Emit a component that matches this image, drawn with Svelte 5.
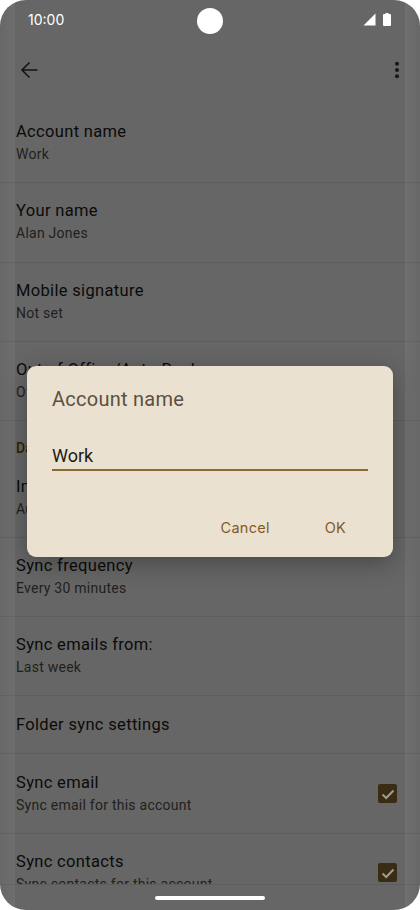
<script lang="ts">
  const groups = [
    [
      { title: "Account name", sub: "Work" },
      { title: "Your name", sub: "Alan Jones" },
      { title: "Mobile signature", sub: "Not set" },
      { title: "Out of Office/Auto-Reply", sub: "Off" }
    ],
    [
      { title: "Inbox check frequency", sub: "Automatic (Push)" },
      { title: "Sync frequency", sub: "Every 30 minutes" },
      { title: "Sync emails from:", sub: "Last week" },
      { title: "Folder sync settings", sub: "" },
      { title: "Sync email", sub: "Sync email for this account", checked: true },
      { title: "Sync contacts", sub: "Sync contacts for this account", checked: true }
    ]
  ];
</script>

<div class="phone">
  <div class="screen">
    <header class="status">
      <span class="time">10:00</span>
      <span class="status-icons">
        <svg width="13" height="13" viewBox="0 0 13 13"><path d="M0.5 12.5 L12.5 12.5 L12.5 0.5 Z" fill="#fff" /></svg>
        <svg width="8" height="13" viewBox="0 0 8 13"><path d="M2.5 0 H5.5 V1 H7 Q8 1 8 2 V12 Q8 13 7 13 H1 Q0 13 0 12 V2 Q0 1 1 1 H2.5 Z" fill="#fff" /></svg>
      </span>
    </header>

    <div class="toolbar">
      <svg width="24" height="24" viewBox="0 0 24 24"><path d="M20.5 12H5M12.5 4.5L5 12l7.5 7.5" fill="none" stroke="#333" stroke-width="1.6" /></svg>
      <svg width="24" height="24" viewBox="0 0 24 24" fill="#3a3a3a"><circle cx="12" cy="5.8" r="2" /><circle cx="12" cy="12" r="2" /><circle cx="12" cy="18.2" r="2" /></svg>
    </div>

    <div class="list">
      {#each groups as group, g}
        {#if g === 1}
          <div class="section">Data usage</div>
        {/if}
        {#each group as item}
          <div class="row" class:single={!item.sub}>
            <div class="row-text">
              <div class="title">{item.title}</div>
              {#if item.sub}<div class="sub">{item.sub}</div>{/if}
            </div>
            {#if item.checked}
              <span class="check">
                <svg width="18" height="18" viewBox="0 0 18 18"><path d="M3.5 9.5 L7.2 13 L14.5 5.5" fill="none" stroke="#a09c90" stroke-width="2" /></svg>
              </span>
            {/if}
          </div>
        {/each}
      {/each}
    </div>

    <div class="nav"></div>
  </div>

  <div class="scrim"></div>
  <div class="edge left"></div>
  <div class="edge right"></div>
  <div class="camera"></div>
  <div class="pill"></div>

  <div class="dialog">
    <div class="dialog-title">Account name</div>
    <div class="field">Work</div>
    <div class="actions">
      <span>Cancel</span>
      <span>OK</span>
    </div>
  </div>
</div>

<style>
  :global(body) {
    margin: 0;
    background: #fff;
  }

  .phone {
    position: relative;
    width: 420px;
    height: 910px;
    overflow: hidden;
    border-radius: 26px;
    font-family: Roboto, "Liberation Sans", sans-serif;
  }

  .screen {
    display: flex;
    flex-direction: column;
    height: 910px;
    background: #fff;
    color: #1d1b16;
  }

  .status {
    display: flex;
    justify-content: space-between;
    align-items: center;
    flex: none;
    height: 38px;
    padding: 0 29px 0 28px;
    position: relative;
    z-index: 2;
    color: #fff;
  }

  .time {
    font-family: Inter, Roboto, sans-serif;
    font-size: 14px;
    color: #fff;
  }

  .status-icons {
    display: flex;
    gap: 7px;
    align-items: center;
  }

  .toolbar {
    display: flex;
    justify-content: space-between;
    align-items: center;
    flex: none;
    height: 64px;
    margin-bottom: 2px;
    padding: 0 11px 0 17px;
  }

  .list {
    flex: 1;
    min-height: 0;
    overflow: hidden;
  }

  .section {
    height: 37.4px;
    padding: 19px 16px 0;
    box-sizing: border-box;
    font-size: 14px;
    line-height: 16px;
    font-weight: 500;
    color: #7c5800;
  }

  .row {
    display: flex;
    justify-content: space-between;
    align-items: center;
    height: 79.3px;
    padding: 0 23px 0 16px;
    box-sizing: border-box;
    border-bottom: 1px solid #e8e8e8;
  }

  .row.single {
    height: 58px;
  }

  .title {
    font-size: 16.5px;
    line-height: 23px;
    letter-spacing: 0.33px;
  }

  .sub {
    font-size: 14px;
    line-height: 23px;
    letter-spacing: 0.25px;
    color: #55524c;
  }

  /* sits above the scrim, the tick stays lighter than the dimmed page */
  .check {
    position: relative;
    z-index: 1;
    display: flex;
    align-items: center;
    justify-content: center;
    width: 19px;
    height: 19px;
    border-radius: 2px;
    background: #3a2c14;
  }

  .nav {
    flex: none;
    height: 25px;
    background: #fff;
    border-top: 1px solid #e8e8e8;
  }

  .scrim {
    position: absolute;
    inset: 0;
    background: rgba(0, 0, 0, 0.6);
  }

  .edge {
    position: absolute;
    top: 0;
    bottom: 0;
    width: 15px;
  }

  .edge.left {
    left: 0;
    background: linear-gradient(to right, rgba(255, 255, 255, 0.01), rgba(255, 255, 255, 0.06));
  }

  .edge.right {
    right: 0;
    background: linear-gradient(to left, rgba(255, 255, 255, 0.01), rgba(255, 255, 255, 0.06));
  }

  .camera {
    position: absolute;
    top: 8px;
    left: 197px;
    width: 26px;
    height: 26px;
    border-radius: 50%;
    background: #fff;
  }

  .pill {
    position: absolute;
    left: 155px;
    bottom: 10px;
    width: 110px;
    height: 4px;
    border-radius: 2px;
    background: #fff;
  }

  .dialog {
    position: absolute;
    z-index: 2;
    top: 366px;
    left: 27px;
    width: 366px;
    height: 191px;
    box-sizing: border-box;
    padding: 20px 25px 0;
    border-radius: 9px;
    background: #ebe1d1;
    box-shadow: 0 6px 24px rgba(0, 0, 0, 0.3);
  }

  .dialog-title {
    font-size: 20px;
    line-height: 27px;
    letter-spacing: 0.25px;
    color: #5b5040;
  }

  .field {
    margin-top: 30px;
    padding-bottom: 1px;
    border-bottom: 2px solid #8c6a36;
    font-size: 18px;
    line-height: 25px;
    color: #1f1b13;
  }

  .actions {
    display: flex;
    justify-content: flex-end;
    gap: 55px;
    margin-top: 45px;
    padding-right: 22px;
    font-family: Inter, Roboto, sans-serif;
    font-size: 14.5px;
    line-height: 24px;
    letter-spacing: 0.25px;
    color: #815b24;
  }
</style>
